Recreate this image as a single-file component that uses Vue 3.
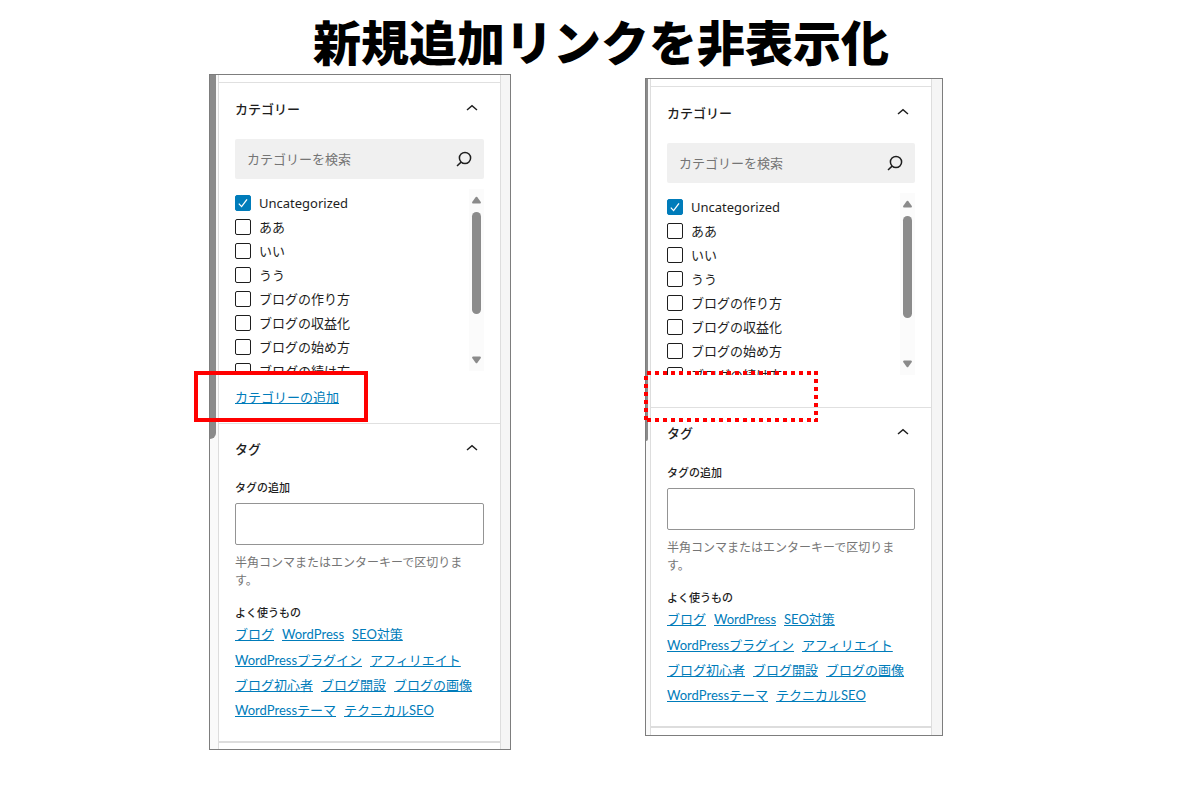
<script setup>
const categories = [
  'Uncategorized',
  'ああ',
  'いい',
  'うう',
  'ブログの作り方',
  'ブログの収益化',
  'ブログの始め方',
  'ブログの続け方',
]
const tags = [
  ['ブログ', 'WordPress', 'SEO対策'],
  ['WordPressプラグイン', 'アフィリエイト'],
  ['ブログ初心者', 'ブログ開設', 'ブログの画像'],
  ['WordPressテーマ', 'テクニカルSEO'],
]
const panels = [
  { id: 'before', addLink: true },
  { id: 'after', addLink: false },
]
</script>

<template>
  <main class="page">
    <h1>新規追加リンクを非表示化</h1>
    <div class="compare">
      <section v-for="p in panels" :key="p.id" class="panel" :class="p.id">
        <div class="outer-track"><div class="outer-thumb"></div></div>
        <div class="sidebar">
          <div class="block categories">
            <h2>
              <button type="button" class="toggle" aria-expanded="true">
                <span>カテゴリー</span>
                <svg class="chevron" viewBox="0 0 12 10" aria-hidden="true"><path d="M1 6 6 1.8 11 6" /></svg>
              </button>
            </h2>
            <div class="search">
              <input type="text" placeholder="カテゴリーを検索" aria-label="カテゴリーを検索" />
              <svg class="glass" viewBox="0 0 16 16" aria-hidden="true">
                <circle cx="9" cy="7" r="5.6" /><path d="M5.1 11.1 1 15" />
              </svg>
            </div>
            <div class="list-row">
              <div class="list">
                <label v-for="(c, i) in categories" :key="c" class="item">
                  <input type="checkbox" :checked="i === 0" />
                  <svg v-if="i === 0" class="tick" viewBox="0 0 16 16" aria-hidden="true"><path d="m3.8 8.6 2.8 3 5.4-7.2" /></svg>
                  <span>{{ c }}</span>
                </label>
              </div>
              <div class="bar">
                <svg viewBox="0 0 10 8" aria-hidden="true"><path d="M4.2.8Q5 0 5.8.8l4 5.4Q10.2 7.6 9 8H1Q-.2 7.6.2 6.2z" /></svg>
                <div class="thumb"></div>
                <svg class="down" viewBox="0 0 10 8" aria-hidden="true"><path d="M4.2.8Q5 0 5.8.8l4 5.4Q10.2 7.6 9 8H1Q-.2 7.6.2 6.2z" /></svg>
              </div>
            </div>
            <a v-if="p.addLink" href="#" class="add">カテゴリーの追加</a>
          </div>
          <div class="block tags">
            <h2>
              <button type="button" class="toggle" aria-expanded="true">
                <span>タグ</span>
                <svg class="chevron" viewBox="0 0 12 10" aria-hidden="true"><path d="M1 6 6 1.8 11 6" /></svg>
              </button>
            </h2>
            <label class="field-label" :for="'tag-' + p.id">タグの追加</label>
            <input :id="'tag-' + p.id" class="field" type="text" />
            <p class="help">半角コンマまたはエンターキーで区切ります。</p>
            <h3>よく使うもの</h3>
            <div class="cloud">
              <div v-for="(row, r) in tags" :key="r" class="cloud-row">
                <a v-for="t in row" :key="t" href="#">{{ t }}</a>
              </div>
            </div>
          </div>
        </div>
        <div v-if="p.addLink" class="mark solid"></div>
        <svg v-else class="mark dotted" aria-hidden="true">
          <path d="M3 2H170" /><path d="M3 49H174" /><path d="M2 5V51" /><path d="M172 0V51" />
        </svg>
      </section>
    </div>
  </main>
</template>

<style>
body {
  margin: 0;
  background: #fff;
}
</style>

<style scoped>
* {
  box-sizing: border-box;
}
.page {
  font-family: "Noto Sans", "Noto Sans CJK JP", sans-serif;
  font-size: 13px;
  line-height: 20px;
  color: #1e1e1e;
}
h1 {
  margin: 0;
  padding: 7px 0 1px 2px;
  text-align: center;
  font-family: "Noto Sans CJK JP", sans-serif;
  font-size: 48px;
  line-height: 66px;
  font-weight: 900;
  color: #000;
}
.compare {
  display: flex;
  justify-content: center;
  align-items: flex-start;
  gap: 134px;
  padding-right: 48px;
}
.panel {
  position: relative;
  display: flex;
  width: 302px;
  border: 1px solid #7d7d7d;
  background: #f5f5f5;
  padding-right: 9px;
}
.after {
  width: 298px;
  margin-top: 4px;
  padding-right: 10px;
}
.outer-track {
  flex: none;
  width: 8px;
  background: #fafafa;
}
.after .outer-track {
  width: 4px;
}
.outer-thumb {
  width: 6px;
  height: 364px;
  background: #8b8b8b;
  border-bottom-right-radius: 6px;
}
.after .outer-thumb {
  width: 2px;
  height: 362px;
}
.sidebar {
  flex: 1;
  min-width: 0;
  padding: 7px 0 6px;
  border: solid #ddd;
  border-width: 0 1px;
  background: #fff;
}
.after .sidebar {
  padding-bottom: 7px;
}
.block {
  border-top: 1px solid #e0e0e0;
  padding: 0 16px;
}
h2 {
  margin: 0;
  font-size: 13px;
}
.toggle {
  display: flex;
  width: 100%;
  align-items: center;
  justify-content: space-between;
  padding: 16px 6px 16px 0;
  border: 0;
  background: none;
  color: #1e1e1e;
  font: inherit;
  font-weight: 500;
  line-height: 20px;
}
.tags .toggle {
  padding: 15px 6px 17px 0;
}
svg {
  fill: none;
  stroke: #1e1e1e;
}
.chevron {
  width: 12px;
  height: 10px;
  stroke-width: 1.5;
}
.search {
  display: flex;
  align-items: center;
  height: 40px;
  margin-top: 4px;
  padding: 0 12px;
  background: #f0f0f0;
  border-radius: 2px;
}
.search input {
  flex: 1;
  min-width: 0;
  padding: 0;
  border: 0;
  background: none;
  font: inherit;
  outline: 0;
}
.search input::placeholder {
  color: #757575;
  opacity: 1;
}
.glass {
  width: 16px;
  height: 16px;
  stroke-width: 1.5;
}
.list-row {
  display: flex;
  height: 182px;
  margin-top: 10px;
}
.list {
  flex: 1;
  overflow: hidden;
  padding-top: 4px;
}
.item {
  position: relative;
  display: flex;
  align-items: center;
  gap: 8px;
  height: 24px;
  padding-bottom: 4px;
}
.item input {
  appearance: none;
  width: 16px;
  height: 16px;
  margin: 0;
  border: 1px solid #1e1e1e;
  border-radius: 2px;
}
.item input:checked {
  background: #007cba;
  border-color: #007cba;
}
.tick {
  position: absolute;
  left: 0;
  width: 16px;
  height: 16px;
  stroke: #fff;
  stroke-width: 1.3;
}
.bar {
  display: flex;
  flex-direction: column;
  align-items: center;
  width: 15px;
  padding: 7px 0;
  background: #fbfbfb;
}
.bar svg {
  width: 9px;
  height: 8px;
  fill: #8b8b8b;
  stroke: none;
}
.bar .down {
  margin-top: auto;
  transform: rotate(180deg);
}
.thumb {
  width: 9px;
  height: 102px;
  margin-top: 8px;
  border-radius: 5px;
  background: #8b8b8b;
}
a {
  color: #007cba;
}
.add {
  display: block;
  width: fit-content;
  margin-top: 16px;
}
.categories {
  padding-bottom: 16px;
}
.after .categories {
  padding-bottom: 32px;
}
.field-label,
h3 {
  display: block;
  margin: 0;
  font-size: 11px;
  line-height: 16px;
  font-weight: 500;
}
.field-label {
  margin-top: 4px;
}
.after .field-label {
  margin-top: 5px;
}
.field {
  display: block;
  width: 100%;
  height: 42px;
  margin-top: 7px;
  border: 1px solid #949494;
  border-radius: 2px;
  font: inherit;
}
.help {
  margin: 9px 0 15px;
  font-size: 12px;
  line-height: 18px;
  color: #757575;
}
.cloud {
  margin-top: 1px;
  padding-bottom: 18px;
}
.cloud-row {
  display: flex;
  gap: 8px;
  line-height: 25px;
  font-family: Lato, "Noto Sans CJK JP", sans-serif;
}
.cloud-row:first-child {
  padding-bottom: 1px;
}
.tags {
  border-bottom: 2px solid #ddd;
}
.mark {
  position: absolute;
  left: -16px;
  top: 296px;
  width: 174px;
  height: 51px;
}
.solid {
  border: 4px solid #f00;
}
.dotted {
  left: -2px;
  top: 292px;
  stroke: #f00;
  stroke-width: 4;
  stroke-dasharray: 4 4;
}
</style>
